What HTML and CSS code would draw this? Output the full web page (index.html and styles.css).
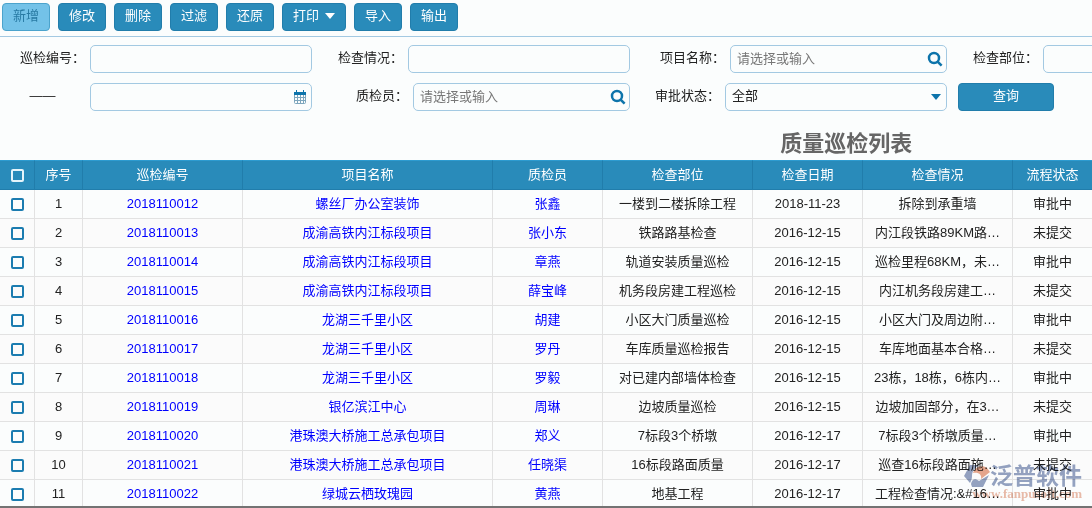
FILE: index.html
```html
<!DOCTYPE html>
<html lang="zh-CN">
<head>
    <meta charset="UTF-8">
    <meta name="viewport" content="width=device-width, initial-scale=1.0">
    <title>质量巡检列表</title>
    <link rel="stylesheet" href="styles.css">
</head>
<body>
    <div class="page">
        <div class="toolbar">
            <button type="button" class="btn active">新增</button>
            <button type="button" class="btn">修改</button>
            <button type="button" class="btn">删除</button>
            <button type="button" class="btn">过滤</button>
            <button type="button" class="btn">还原</button>
            <button type="button" class="btn">打印<span class="caret"></span></button>
            <button type="button" class="btn">导入</button>
            <button type="button" class="btn">输出</button>
        </div>

        <form class="filters">
            <div class="field">
                <label for="code">巡检编号：</label>
                <div class="control"><input type="text" id="code"></div>
            </div>
            <div class="field">
                <label for="result">检查情况：</label>
                <div class="control"><input type="text" id="result"></div>
            </div>
            <div class="field">
                <label for="project">项目名称：</label>
                <div class="control short">
                    <input type="text" id="project" placeholder="请选择或输入">
                    <svg class="icon" width="16" height="16" viewBox="0 0 16 16"><circle cx="7" cy="7" r="5" /><path d="M10.6 10.6L14.6 14.6" /></svg>
                </div>
            </div>
            <div class="field">
                <label for="part">检查部位：</label>
                <div class="control"><input type="text" id="part"></div>
            </div>
            <div class="field">
                <label for="date" class="range">——</label>
                <div class="control">
                    <input type="text" id="date">
                    <svg class="icon calendar" width="14" height="14" viewBox="0 0 14 14">
                        <rect class="frame" x="1.5" y="2.5" width="11" height="11" rx="1" />
                        <path class="bar" d="M1 2h12v3H1z" />
                        <path class="rings" d="M3.5 0v3M10.5 0v3" />
                        <path class="lines" d="M1 7.5h12M1 10.5h12M4.5 5v9M7.5 5v9M10.5 5v9" />
                    </svg>
                </div>
            </div>
            <div class="field">
                <label for="inspector">质检员：</label>
                <div class="control short">
                    <input type="text" id="inspector" placeholder="请选择或输入">
                    <svg class="icon" width="16" height="16" viewBox="0 0 16 16"><circle cx="7" cy="7" r="5" /><path d="M10.6 10.6L14.6 14.6" /></svg>
                </div>
            </div>
            <div class="field">
                <label for="status">审批状态：</label>
                <div class="control">
                    <select id="status">
                        <option>全部</option>
                    </select>
                    <span class="caret"></span>
                </div>
            </div>
            <div class="field submit">
                <button type="submit" class="btn">查询</button>
            </div>
        </form>

        <h1 class="title">质量巡检列表</h1>

        <table class="list">
            <colgroup>
                <col class="w-check">
                <col class="w-no">
                <col class="w-code">
                <col class="w-project">
                <col class="w-person">
                <col class="w-part">
                <col class="w-person">
                <col class="w-part">
                <col>
            </colgroup>
            <thead>
                <tr>
                    <th><input type="checkbox" aria-label="全选"></th>
                    <th>序号</th>
                    <th>巡检编号</th>
                    <th>项目名称</th>
                    <th>质检员</th>
                    <th>检查部位</th>
                    <th>检查日期</th>
                    <th>检查情况</th>
                    <th>流程状态</th>
                </tr>
            </thead>
            <tbody>
                <tr>
                    <td><input type="checkbox" aria-label="1"></td>
                    <td>1</td>
                    <td><a href="#">2018110012</a></td>
                    <td><a href="#">螺丝厂办公室装饰</a></td>
                    <td><a href="#">张鑫</a></td>
                    <td>一楼到二楼拆除工程</td>
                    <td>2018-11-23</td>
                    <td>拆除到承重墙</td>
                    <td>审批中</td>
                </tr>
                <tr>
                    <td><input type="checkbox" aria-label="2"></td>
                    <td>2</td>
                    <td><a href="#">2018110013</a></td>
                    <td><a href="#">成渝高铁内江标段项目</a></td>
                    <td><a href="#">张小东</a></td>
                    <td>铁路路基检查</td>
                    <td>2016-12-15</td>
                    <td>内江段铁路89KM路…</td>
                    <td>未提交</td>
                </tr>
                <tr>
                    <td><input type="checkbox" aria-label="3"></td>
                    <td>3</td>
                    <td><a href="#">2018110014</a></td>
                    <td><a href="#">成渝高铁内江标段项目</a></td>
                    <td><a href="#">章燕</a></td>
                    <td>轨道安装质量巡检</td>
                    <td>2016-12-15</td>
                    <td>巡检里程68KM，未…</td>
                    <td>审批中</td>
                </tr>
                <tr>
                    <td><input type="checkbox" aria-label="4"></td>
                    <td>4</td>
                    <td><a href="#">2018110015</a></td>
                    <td><a href="#">成渝高铁内江标段项目</a></td>
                    <td><a href="#">薛宝峰</a></td>
                    <td>机务段房建工程巡检</td>
                    <td>2016-12-15</td>
                    <td>内江机务段房建工…</td>
                    <td>未提交</td>
                </tr>
                <tr>
                    <td><input type="checkbox" aria-label="5"></td>
                    <td>5</td>
                    <td><a href="#">2018110016</a></td>
                    <td><a href="#">龙湖三千里小区</a></td>
                    <td><a href="#">胡建</a></td>
                    <td>小区大门质量巡检</td>
                    <td>2016-12-15</td>
                    <td>小区大门及周边附…</td>
                    <td>审批中</td>
                </tr>
                <tr>
                    <td><input type="checkbox" aria-label="6"></td>
                    <td>6</td>
                    <td><a href="#">2018110017</a></td>
                    <td><a href="#">龙湖三千里小区</a></td>
                    <td><a href="#">罗丹</a></td>
                    <td>车库质量巡检报告</td>
                    <td>2016-12-15</td>
                    <td>车库地面基本合格…</td>
                    <td>未提交</td>
                </tr>
                <tr>
                    <td><input type="checkbox" aria-label="7"></td>
                    <td>7</td>
                    <td><a href="#">2018110018</a></td>
                    <td><a href="#">龙湖三千里小区</a></td>
                    <td><a href="#">罗毅</a></td>
                    <td>对已建内部墙体检查</td>
                    <td>2016-12-15</td>
                    <td>23栋，18栋，6栋内…</td>
                    <td>审批中</td>
                </tr>
                <tr>
                    <td><input type="checkbox" aria-label="8"></td>
                    <td>8</td>
                    <td><a href="#">2018110019</a></td>
                    <td><a href="#">银亿滨江中心</a></td>
                    <td><a href="#">周琳</a></td>
                    <td>边坡质量巡检</td>
                    <td>2016-12-15</td>
                    <td>边坡加固部分，在3…</td>
                    <td>未提交</td>
                </tr>
                <tr>
                    <td><input type="checkbox" aria-label="9"></td>
                    <td>9</td>
                    <td><a href="#">2018110020</a></td>
                    <td><a href="#">港珠澳大桥施工总承包项目</a></td>
                    <td><a href="#">郑义</a></td>
                    <td>7标段3个桥墩</td>
                    <td>2016-12-17</td>
                    <td>7标段3个桥墩质量…</td>
                    <td>审批中</td>
                </tr>
                <tr>
                    <td><input type="checkbox" aria-label="10"></td>
                    <td>10</td>
                    <td><a href="#">2018110021</a></td>
                    <td><a href="#">港珠澳大桥施工总承包项目</a></td>
                    <td><a href="#">任晓渠</a></td>
                    <td>16标段路面质量</td>
                    <td>2016-12-17</td>
                    <td>巡查16标段路面施…</td>
                    <td>未提交</td>
                </tr>
                <tr>
                    <td><input type="checkbox" aria-label="11"></td>
                    <td>11</td>
                    <td><a href="#">2018110022</a></td>
                    <td><a href="#">绿城云栖玫瑰园</a></td>
                    <td><a href="#">黄燕</a></td>
                    <td>地基工程</td>
                    <td>2016-12-17</td>
                    <td>工程检查情况:&amp;#16…</td>
                    <td>审批中</td>
                </tr>
            </tbody>
        </table>

        <div class="watermark">
            <div class="brand">
                <svg width="26" height="24" viewBox="0 0 26 24">
                    <path fill="#7184ad" d="M6 1h9C10 4 8 8 8 12c0 3-1 5-2 7L0 12z" />
                    <path fill="#e08a66" d="M9 9c2-6 9-9 14-5l3 4-9 7c1-4-2-7-8-6z" />
                    <path fill="#7184ad" d="M7 20c1-5 4-6 8-3l10-6-6 12H8z" />
                </svg>
                <span>泛普软件</span>
            </div>
            <div class="site">www.fanpusoft.com</div>
        </div>
    </div>
</body>
</html>
```
FILE: styles.css
```css
* {
    box-sizing: border-box;
}
body {
    margin: 0;
    font-family: "Liberation Sans", "Noto Sans CJK SC", sans-serif;
    font-size: 13px;
    line-height: 18px;
    color: #222;
    background-color: #fbfdfd;
}
.page {
    position: relative;
    height: 100vh;
    overflow: hidden;
    border-bottom: 2px solid #737373;
}
input, select, button {
    font: inherit;
    color: inherit;
}

/* toolbar */
.toolbar {
    display: flex;
    gap: 8px;
    padding: 3px 2px 5px;
    border-bottom: 1px solid #a3c9e2;
}
.btn {
    display: flex;
    align-items: center;
    justify-content: center;
    gap: 6px;
    height: 28px;
    padding: 0 10px 2px;
    border: 1px solid #217dab;
    border-radius: 4px;
    background-color: #298bba;
    color: #fff;
    cursor: pointer;
}
.btn:hover,
.btn.active {
    background-color: #73c2e8;
    border-color: #4ba3cc;
    color: #287aa3;
}
.caret {
    border: 5px solid transparent;
    border-top: 6px solid currentColor;
    border-bottom: 0;
}

/* search form */
.filters {
    display: grid;
    grid-template-columns: 312px 318px 317px 318px;
    row-gap: 10px;
    padding-top: 8px;
}
.field {
    display: flex;
    align-items: center;
    justify-content: flex-end;
    gap: 5px;
}
.field label {
    padding-bottom: 2px;
    white-space: nowrap;
}
.field .range {
    flex: 1;
    text-align: center;
}
.control {
    position: relative;
    width: 222px;
}
.control.short {
    width: 217px;
}
.control input,
.control select {
    display: block;
    width: 100%;
    height: 28px;
    padding: 0 30px 2px 6px;
    border: 1px solid #a3c9e2;
    border-radius: 5px;
    background-color: #fbfdfd;
    appearance: none;
    outline: none;
}
.control input::placeholder {
    color: #777;
}
.control .icon {
    position: absolute;
    top: 6px;
    right: 4px;
    fill: none;
    stroke: #0d74ab;
    stroke-width: 2.5;
}
.control .calendar {
    top: 7px;
    right: 5px;
    stroke-width: 1;
}
.calendar .bar {
    fill: #0d74ab;
    stroke: none;
}
.calendar .frame,
.calendar .lines {
    stroke: #7da6bd;
}
.control .caret {
    position: absolute;
    top: 11px;
    right: 6px;
    color: #0d74ab;
    pointer-events: none;
}
.submit {
    justify-content: flex-start;
    padding-left: 11px;
}
.submit .btn {
    width: 96px;
}

.title {
    width: 155%;
    margin: 0;
    padding: 18px 0 1px;
    font-size: 22px;
    line-height: 30px;
    text-align: center;
    color: #666;
}

/* list */
.list {
    width: 100%;
    min-width: 1093px;
    table-layout: fixed;
    border-collapse: separate;
    border-spacing: 0;
    text-align: center;
}
.w-check {
    width: 35px;
}
.w-no {
    width: 48px;
}
.w-code {
    width: 160px;
}
.w-project {
    width: 250px;
}
.w-person {
    width: 110px;
}
.w-part {
    width: 150px;
}
.list th,
.list td {
    height: 29px;
    padding: 0 4px;
    border-right: 1px solid #e2e2e2;
    border-bottom: 1px solid #e2e2e2;
    white-space: nowrap;
    overflow: hidden;
    text-overflow: ellipsis;
}
.list th {
    height: 30px;
    border-top: 1px solid #2d9bd0;
    border-color: #2d9bd0 #217dab #217dab;
    background-color: #298bba;
    color: #fff;
    font-weight: normal;
}
.list tbody tr:nth-child(even) {
    background-color: #fbfbfb;
}
.list a {
    color: #00f;
    text-decoration: none;
}
.list input {
    display: block;
    width: 13px;
    height: 13px;
    margin: 0 auto;
    border: 2px solid #1b7cb0;
    border-radius: 2px;
    appearance: none;
}
.list th input {
    border-color: #e6f5fb;
}

/* watermark */
.watermark {
    position: absolute;
    right: 10px;
    bottom: 6px;
    opacity: 0.75;
    mix-blend-mode: multiply;
    text-align: right;
    pointer-events: none;
}
.brand {
    display: flex;
    align-items: center;
    font-size: 23px;
    line-height: 24px;
    font-weight: bold;
    color: #7184ad;
}
.site {
    font-family: "Liberation Serif", serif;
    font-size: 13px;
    line-height: 12px;
    font-weight: bold;
    color: #e5a58c;
}
```
